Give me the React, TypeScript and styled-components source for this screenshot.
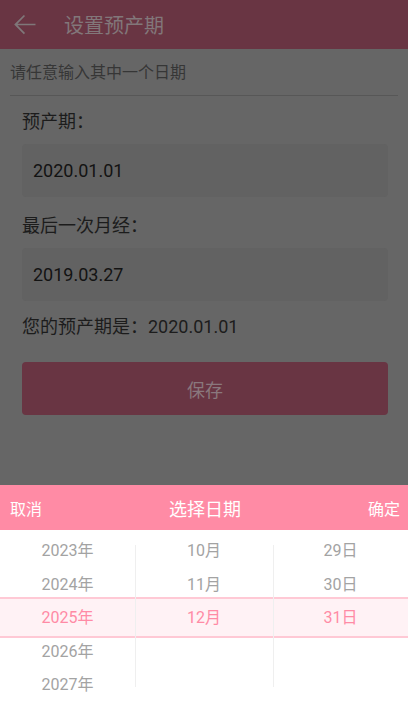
import React from "react";
import styled, { createGlobalStyle } from "styled-components";

const GlobalStyle = createGlobalStyle`
  html, body {
    margin: 0;
    padding: 0;
    background: #666666;
    font-family: Roboto, "Noto Sans CJK SC", sans-serif;
  }
  * {
    box-sizing: border-box;
  }
`;

const Page = styled.div`
  height: 100vh;
  display: flex;
  flex-direction: column;
  background: #666666;
`;

const Header = styled.header`
  height: 49px;
  display: flex;
  align-items: center;
  padding-left: 8px;
  gap: 23px;
  background: #693543;
`;

const BackIcon = styled.svg`
  width: 33px;
  height: 33px;
  fill: #7f7779;
`;

const Title = styled.h1`
  margin: 0;
  font-size: 20px;
  font-weight: 400;
  color: #82777a;
`;

const Main = styled.main`
  flex: 1;
  padding: 0 10px;
`;

const Hint = styled.div`
  height: 47px;
  line-height: 47px;
  font-size: 16px;
  color: #363636;
  border-bottom: 1px solid #575757;
`;

const Form = styled.div`
  padding: 0 10px 0 12px;
  display: flex;
  flex-direction: column;
`;

const Label = styled.div`
  margin: 13px 0 10px;
  line-height: 25px;
  font-size: 18px;
  color: #1c1c1c;
`;

const DateBox = styled.div`
  height: 53px;
  margin-bottom: 3px;
  padding: 0 11px;
  display: flex;
  align-items: center;
  border-radius: 4px;
  background: #626262;
  font-size: 18px;
  color: #131313;
`;

const Result = styled(Label)`
  margin: 10px 0 23px;
`;

const SaveButton = styled.button`
  height: 53px;
  border: none;
  border-radius: 4px;
  background: #693543;
  color: #8a787d;
  font-family: inherit;
  font-size: 18px;
`;

const Picker = styled.section`
  background: #ffffff;
`;

const PickerBar = styled.div`
  height: 45px;
  padding: 0 8px 0 10px;
  display: grid;
  grid-template-columns: 1fr auto 1fr;
  align-items: center;
  background: #ff8ba5;
  color: #ffffff;
`;

const BarAction = styled.span<{ $right?: boolean }>`
  font-size: 16px;
  justify-self: ${(p) => (p.$right ? "end" : "start")};
`;

const BarTitle = styled.span`
  font-size: 18px;
`;

const Wheel = styled.div`
  position: relative;
  height: 173px;
  padding-top: 4px;
  display: grid;
  grid-template-columns: 135px 138px 1fr;
  overflow: hidden;
`;

const Highlight = styled.div`
  position: absolute;
  left: 0;
  right: 0;
  top: 67px;
  height: 41px;
  background: #fff2f5;
  border-top: 2px solid #ffc9d5;
  border-bottom: 2px solid #ffc9d5;
`;

const Column = styled.div<{ $divider?: boolean }>`
  position: relative;
  display: flex;
  flex-direction: column;
  align-items: center;

  &::before {
    content: "";
    display: ${(p) => (p.$divider ? "block" : "none")};
    position: absolute;
    left: 0;
    top: 11px;
    height: 142px;
    width: 1px;
    background: #efefef;
  }
`;

const Item = styled.div<{ $active?: boolean }>`
  height: 33.5px;
  line-height: 33.5px;
  font-size: 16px;
  color: ${(p) => (p.$active ? "#ff8ba5" : "#a3a3a3")};
`;

const columns = [
  { items: ["2023年", "2024年", "2025年", "2026年", "2027年"], active: 2 },
  { items: ["10月", "11月", "12月"], active: 2 },
  { items: ["29日", "30日", "31日"], active: 2 },
];

export default function App() {
  return (
    <Page>
      <GlobalStyle />
      <Header>
        <BackIcon viewBox="0 0 24 24">
          <path d="M20 11.4H6.9l5.5-5.5-0.9-0.9L4.5 12l7 7 0.9-0.9-5.5-5.5H20v-1.2z" />
        </BackIcon>
        <Title>设置预产期</Title>
      </Header>
      <Main>
        <Hint>请任意输入其中一个日期</Hint>
        <Form>
          <Label>预产期：</Label>
          <DateBox>2020.01.01</DateBox>
          <Label>最后一次月经：</Label>
          <DateBox>2019.03.27</DateBox>
          <Result>您的预产期是：2020.01.01</Result>
          <SaveButton>保存</SaveButton>
        </Form>
      </Main>
      <Picker>
        <PickerBar>
          <BarAction>取消</BarAction>
          <BarTitle>选择日期</BarTitle>
          <BarAction $right>确定</BarAction>
        </PickerBar>
        <Wheel>
          <Highlight />
          {columns.map((col, i) => (
            <Column key={i} $divider={i > 0}>
              {col.items.map((text, j) => (
                <Item key={text} $active={j === col.active}>
                  {text}
                </Item>
              ))}
            </Column>
          ))}
        </Wheel>
      </Picker>
    </Page>
  );
}
